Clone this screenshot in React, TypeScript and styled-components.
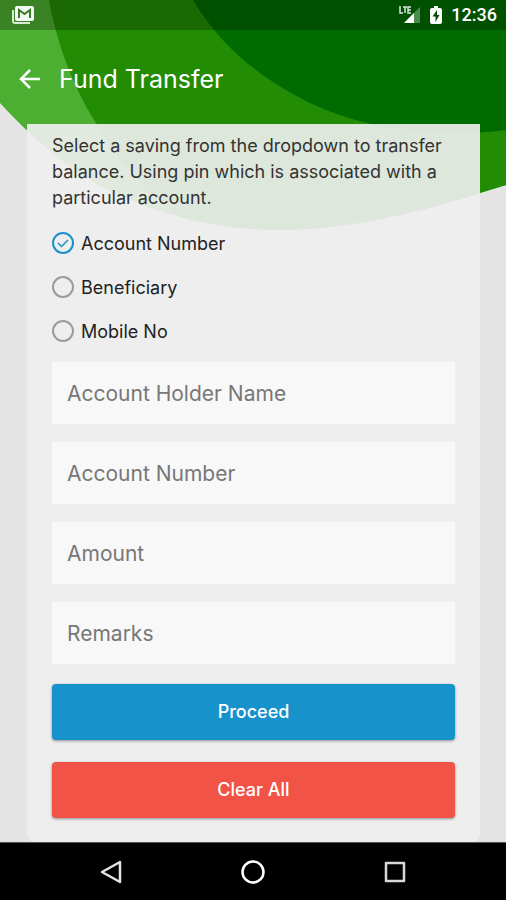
import React, { useState } from "react";
import styled, { createGlobalStyle } from "styled-components";

const GlobalStyle = createGlobalStyle`
  *, *::before, *::after { box-sizing: border-box; }
  body { margin: 0; background: #e4e4e4; font-family: Inter, "Open Sans", sans-serif; }
`;

const Screen = styled.div`
  position: relative;
  isolation: isolate;
  display: flex;
  flex-direction: column;
  min-height: 100vh;
  background: #e4e4e4;
`;

const Backdrop = styled.svg`
  position: absolute;
  inset: 0 0 auto;
  z-index: -1;
  width: 100%;
  height: 232px;
`;

const StatusBar = styled.div`
  display: flex;
  align-items: center;
  height: 30px;
  padding: 0 9px 0 11px;
  background: rgba(0, 0, 0, 0.25);
  color: #fff;
`;

const StatusIcons = styled.div`
  display: flex;
  align-items: center;
  gap: 9px;
  margin-left: auto;
`;

const Clock = styled.time`
  font: 500 18px/30px Roboto, sans-serif;
`;

const AppBar = styled.header`
  display: flex;
  align-items: center;
  gap: 18px;
  height: 94px;
  padding: 4px 19px 0;
  color: #fff;
`;

const BackButton = styled.button`
  display: flex;
  padding: 0;
  border: 0;
  background: none;
  color: inherit;
  cursor: pointer;
`;

const Title = styled.h1`
  margin: 0;
  font-size: 25px;
  font-weight: 400;
  line-height: 32px;
`;

const Card = styled.form`
  flex: 1;
  display: flex;
  flex-direction: column;
  margin: 0 26px 0 27px;
  padding: 9px 25px 24px;
  border-radius: 0 0 8px 8px;
  background: rgba(239, 239, 239, 0.92);
`;

const Intro = styled.p`
  margin: 0 0 10px;
  color: #333;
  font-size: 18px;
  line-height: 26px;
`;

const Options = styled.fieldset`
  display: flex;
  flex-direction: column;
  margin: 0 0 9px;
  padding: 0;
  border: 0;
`;

const Option = styled.label`
  display: flex;
  align-items: center;
  gap: 7px;
  height: 44px;
  color: #222;
  font-size: 18px;
  cursor: pointer;
`;

const RadioMark = styled.span`
  display: grid;
  width: 22px;
  height: 22px;

  > * { grid-area: 1 / 1; }
`;

const Radio = styled.input`
  appearance: none;
  width: 22px;
  height: 22px;
  margin: 0;
  border: 2px solid #9b9b9b;
  border-radius: 50%;

  &:checked { border-color: #1b91ca; }
  & + svg { visibility: hidden; pointer-events: none; }
  &:checked + svg { visibility: visible; }
`;

const Fields = styled.div`
  display: flex;
  flex-direction: column;
  gap: 18px;
  margin-bottom: 20px;
`;

const Field = styled.input`
  width: 100%;
  height: 62px;
  padding: 0 15px;
  border: 0;
  border-radius: 0;
  background: #f8f8f8;
  color: #333;
  font: 400 21px/26px Inter, sans-serif;

  &::placeholder { color: #777; opacity: 1; }
`;

const Actions = styled.div`
  display: flex;
  flex-direction: column;
  gap: 22px;
`;

const ActionButton = styled.button<{ $color: string }>`
  height: 56px;
  border: 0;
  border-radius: 4px;
  background: ${({ $color }) => $color};
  box-shadow: 0 1px 3px rgba(0, 0, 0, 0.4);
  color: #fff;
  font: 500 18px/24px Inter, sans-serif;
  cursor: pointer;
`;

const NavBar = styled.nav`
  display: flex;
  align-items: center;
  justify-content: center;
  gap: 114px;
  height: 58px;
  border-top: 1px solid #555;
  background: #000;
`;

const NavButton = styled.button`
  display: flex;
  padding: 0;
  border: 0;
  background: none;
  cursor: pointer;
`;

const transferTypes = ["Account Number", "Beneficiary", "Mobile No"];
const fieldNames = ["Account Holder Name", "Account Number", "Amount", "Remarks"];

function MailIcon() {
  return (
    <svg width="24" height="20" viewBox="0 0 24 20" fill="none" aria-hidden="true">
      <path d="M2 5v11q0 2 2 2h15" stroke="#dce8d8" strokeWidth="2" />
      <rect x="4" y="1" width="19" height="15" rx="2" fill="#f4f8f2" />
      <path d="M8 13V5l5.500 4L19 5v8" stroke="#397b25" strokeWidth="2" />
    </svg>
  );
}

function SignalIcon() {
  return (
    <svg width="22" height="20" viewBox="0 0 22 20" fill="none" aria-hidden="true">
      <path d="M1 1v7h3M4 2h4M6 2v6M12 2H9v6h3M9 5h3" stroke="#dce8dc" strokeWidth="1.500" />
      <path d="M5 18 21 2v16Z" fill="#4e8b4e" />
      <path d="M5 18 15 8v10Z" fill="#fff" />
    </svg>
  );
}

function BatteryIcon() {
  return (
    <svg width="12" height="20" viewBox="0 0 12 20" aria-hidden="true">
      <path d="M4 1h4v2h2q2 0 2 2v12q0 2-2 2H2q-2 0-2-2V5q0-2 2-2h2Z" fill="#fff" />
      <path d="M7 5 2.500 11.500h3V17l4-7H7Z" fill="#034d03" />
    </svg>
  );
}

export default function App() {
  const [selected, setSelected] = useState(transferTypes[0]);

  return (
    <>
      <GlobalStyle />
      <Screen>
        <Backdrop viewBox="0 0 506 232" preserveAspectRatio="none" aria-hidden="true">
          <defs>
            <clipPath id="wave">
              <path d="M0 0H506V185L480 193C425 211 350 230 280 230C220 230 160 216 110 191C75 174 40 146 0 103Z" />
            </clipPath>
          </defs>
          <g clipPath="url(#wave)">
            <path d="M0 0H506V232H0Z" fill="#4caf31" />
            <path d="M49 0C55 35 70 82 96 123C120 166 155 205 205 232H506V0Z" fill="#238c05" />
            <path d="M193 0C222 48 260 78 310 103C365 129 435 139 506 130V0Z" fill="#006b00" />
          </g>
        </Backdrop>

        <StatusBar>
          <MailIcon />
          <StatusIcons>
            <SignalIcon />
            <BatteryIcon />
            <Clock>12:36</Clock>
          </StatusIcons>
        </StatusBar>

        <AppBar>
          <BackButton type="button" aria-label="Back">
            <svg width="22" height="22" viewBox="0 0 22 22" fill="none" stroke="#fff" strokeWidth="2.500">
              <path d="M11 2 2 11l9 9M2 11h19" />
            </svg>
          </BackButton>
          <Title>Fund Transfer</Title>
        </AppBar>

        <Card onSubmit={(event) => event.preventDefault()}>
          <Intro>
            Select a saving from the dropdown to transfer balance. Using pin which is associated with a
            particular account.
          </Intro>

          <Options aria-label="Transfer to">
            {transferTypes.map((type) => (
              <Option key={type}>
                <RadioMark>
                  <Radio
                    type="radio"
                    name="transferType"
                    checked={selected === type}
                    onChange={() => setSelected(type)}
                  />
                  <svg width="22" height="22" viewBox="0 0 22 22" fill="none" stroke="#1b91ca" strokeWidth="1.500">
                    <path d="m6 11 3.500 3.500L16 8" />
                  </svg>
                </RadioMark>
                {type}
              </Option>
            ))}
          </Options>

          <Fields>
            {fieldNames.map((name) => (
              <Field key={name} type="text" placeholder={name} aria-label={name} />
            ))}
          </Fields>

          <Actions>
            <ActionButton type="submit" $color="#1792cb">Proceed</ActionButton>
            <ActionButton type="reset" $color="#f15347">Clear All</ActionButton>
          </Actions>
        </Card>

        <NavBar aria-label="System">
          <NavButton type="button" aria-label="Back">
            <svg width="28" height="28" viewBox="0 0 28 28" fill="none" stroke="#e4e4e4" strokeWidth="2.500" strokeLinejoin="round">
              <path d="M5 14 23 4v20Z" />
            </svg>
          </NavButton>
          <NavButton type="button" aria-label="Home">
            <svg width="28" height="28" viewBox="0 0 28 28" fill="none" stroke="#fff" strokeWidth="2.500">
              <circle cx="14" cy="14" r="10.500" />
            </svg>
          </NavButton>
          <NavButton type="button" aria-label="Recent apps">
            <svg width="28" height="28" viewBox="0 0 28 28" fill="none" stroke="#d8d8d8" strokeWidth="2.500" strokeLinejoin="round">
              <path d="M5 5h18v18H5Z" />
            </svg>
          </NavButton>
        </NavBar>
      </Screen>
    </>
  );
}
